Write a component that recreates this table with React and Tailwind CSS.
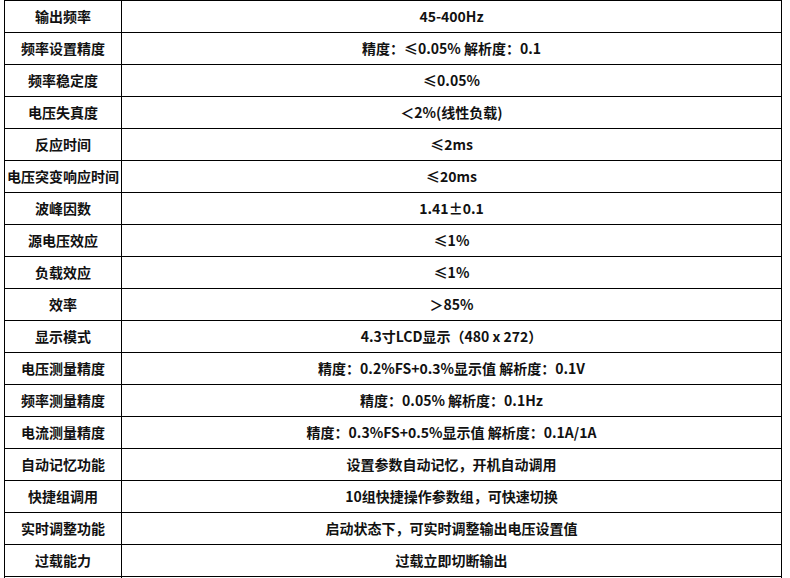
const rows = [
  ["输出频率", "45-400Hz"],
  ["频率设置精度", "精度：≤0.05% 解析度：0.1"],
  ["频率稳定度", "≤0.05%"],
  ["电压失真度", "＜2%(线性负载)"],
  ["反应时间", "≤2ms"],
  ["电压突变响应时间", "≤20ms"],
  ["波峰因数", "1.41±0.1"],
  ["源电压效应", "≤1%"],
  ["负载效应", "≤1%"],
  ["效率", "＞85%"],
  ["显示模式", "4.3寸LCD显示（480 x 272）"],
  ["电压测量精度", "精度：0.2%FS+0.3%显示值 解析度：0.1V"],
  ["频率测量精度", "精度：0.05% 解析度：0.1Hz"],
  ["电流测量精度", "精度：0.3%FS+0.5%显示值 解析度：0.1A/1A"],
  ["自动记忆功能", "设置参数自动记忆，开机自动调用"],
  ["快捷组调用", "10组快捷操作参数组，可快速切换"],
  ["实时调整功能", "启动状态下，可实时调整输出电压设置值"],
  ["过载能力", "过载立即切断输出"],
  ["", ""],
];

export default function App() {
  return (
    <div className="w-[790px] h-[578px] overflow-hidden bg-white">
      <div
        className="ml-[4px] w-[778px] border-l border-t border-black text-[14px] font-bold text-[#111]"
        style={{ fontFamily: '"Noto Sans CJK SC", "Noto Sans", sans-serif' }}
      >
        {rows.map(([k, v], i) => (
          <div key={i} className="flex h-[32px]">
            <div className="w-[117px] shrink-0 border-r border-b border-black flex items-center justify-center whitespace-nowrap">
              {k}
            </div>
            <div className="w-[660px] border-r border-b border-black flex items-center justify-center whitespace-nowrap">
              {v}
            </div>
          </div>
        ))}
      </div>
    </div>
  );
}
